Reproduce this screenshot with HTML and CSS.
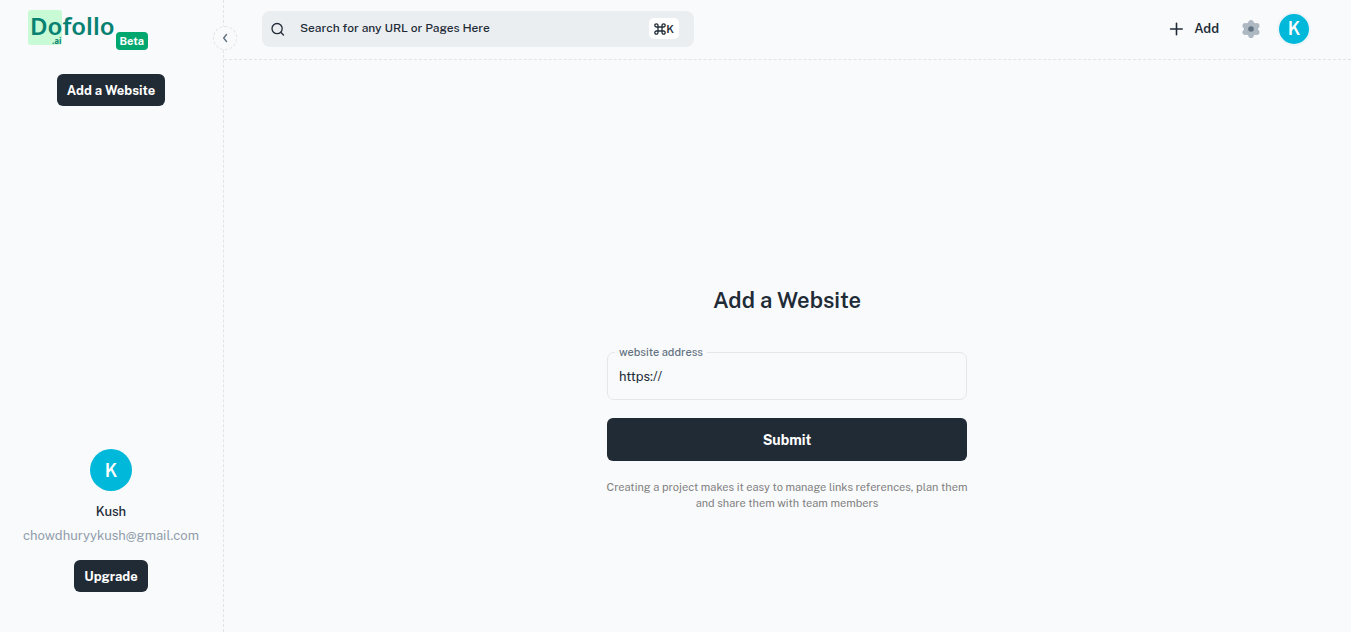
FILE: index.html
```html
<!DOCTYPE html>
<html lang="en">
<head>
    <meta charset="UTF-8">
    <meta name="viewport" content="width=device-width, initial-scale=1.0">
    <title>Dofollo.ai - Add a Website</title>
    <link rel="stylesheet" href="styles.css">
</head>
<body>
    <div class="layout">
        <aside class="sidebar">
            <a href="#" class="logo">
                <span class="logo-mark">Do<small class="logo-tld">.ai</small></span>
                <span class="logo-rest">follo</span>
                <span class="badge">Beta</span>
            </a>
            <button type="button" class="btn">Add a Website</button>
            <div class="account">
                <span class="avatar avatar-large">K</span>
                <div class="account-name">Kush</div>
                <div class="account-email">chowdhuryykush@gmail.com</div>
                <button type="button" class="btn">Upgrade</button>
            </div>
            <button type="button" class="collapse" aria-label="Collapse menu">
                <svg width="12" height="12" viewBox="0 0 12 12" fill="none" stroke="#637381" stroke-width="1.4" stroke-linecap="round" stroke-linejoin="round">
                    <path d="M7.5 2.5 4.7 6l2.8 3.5"/>
                </svg>
            </button>
        </aside>

        <div class="page">
            <header class="header">
                <div class="search">
                    <svg width="16" height="16" viewBox="0 0 16 16" fill="none" stroke="#212b36" stroke-width="1.3" stroke-linecap="round">
                        <circle cx="7.1" cy="7.6" r="5.1"/>
                        <path d="m11 11.5 2.5 2.5"/>
                    </svg>
                    <input type="text" class="search-input" placeholder="Search for any URL or Pages Here" aria-label="Search">
                    <kbd class="shortcut"><svg width="12" height="12" viewBox="0 0 12 12" fill="none" stroke="#212b36" stroke-width="1.3">
                        <path d="M4 4h4v4H4zM4 4H2.5A1.6 1.6 0 1 1 4 2.4zM8 4V2.4A1.6 1.6 0 1 1 9.5 4zM8 8h1.5A1.6 1.6 0 1 1 8 9.6zM4 8v1.6A1.6 1.6 0 1 1 2.5 8z"/>
                    </svg>K</kbd>
                </div>
                <div class="actions">
                    <button type="button" class="add-btn">
                        <svg width="14" height="14" viewBox="0 0 14 14" fill="none" stroke="#212b36" stroke-width="1.6" stroke-linecap="round">
                            <path d="M7.5 1.2v11.6M1.6 7h11.6"/>
                        </svg>
                        Add
                    </button>
                    <button type="button" class="icon-btn" aria-label="Settings">
                        <svg width="20" height="20" viewBox="0 0 20 20">
                            <g fill="#adb8c2">
                                <circle cx="10" cy="10" r="7.2"/>
                                <circle cx="10" cy="3.6" r="2.6"/>
                                <circle cx="15.8" cy="6.8" r="2.7"/>
                                <circle cx="15.8" cy="13.2" r="2.7"/>
                                <circle cx="10" cy="16.4" r="2.6"/>
                                <circle cx="4.2" cy="13.2" r="2.7"/>
                                <circle cx="4.2" cy="6.8" r="2.7"/>
                            </g>
                            <circle cx="10" cy="10" r="2.8" fill="#637381"/>
                        </svg>
                    </button>
                    <button type="button" class="avatar avatar-small" aria-label="Account">K</button>
                </div>
            </header>

            <main class="main">
                <form class="website-form">
                    <h1>Add a Website</h1>
                    <div class="field">
                        <label for="address">website address</label>
                        <input type="text" id="address" value="https://">
                    </div>
                    <button type="submit" class="btn submit">Submit</button>
                    <p class="hint">Creating a project makes it easy to manage links references, plan them and share them with team members</p>
                </form>
            </main>
        </div>
    </div>
</body>
</html>
```
FILE: styles.css
```css
* {
    box-sizing: border-box;
}
body {
    margin: 0;
    font-family: "Public Sans", Inter, sans-serif;
    font-size: 13px;
    color: #212b36;
    background-color: #f9fafc;
}
button, input {
    font-family: inherit;
    color: inherit;
}
button {
    padding: 0;
    border: none;
    background: none;
    cursor: pointer;
}
svg {
    display: block;
    flex-shrink: 0;
}
.layout {
    display: flex;
    min-height: 100vh;
}

/* sidebar */
.sidebar {
    position: relative;
    display: flex;
    flex-direction: column;
    align-items: center;
    width: 224px;
    flex-shrink: 0;
    padding: 10px 1px 40px 0;
    border-right: 1px dashed #e1e4e8;
}
.logo {
    display: flex;
    align-self: flex-start;
    height: 40px;
    margin: 0 0 24px 28px;
    color: #078171;
    font-family: "Noto Sans", sans-serif;
    font-size: 24px;
    font-weight: 600;
    line-height: 32px;
    text-decoration: none;
}
.logo-mark {
    display: flex;
    flex-direction: column;
    height: 35px;
    padding-left: 2px;
    border-radius: 3px;
    background-color: #c8fad6;
}
.logo-tld {
    align-self: flex-end;
    margin: -6px 1px 0 0;
    font-size: 8px;
    font-weight: 700;
    line-height: 9px;
}
.badge {
    align-self: flex-end;
    margin-left: 1px;
    padding: 0 4px;
    border-radius: 4px;
    background-color: #00a76f;
    color: #fff;
    font-family: "Public Sans", Inter, sans-serif;
    font-size: 11px;
    font-weight: 700;
    line-height: 18px;
}
.btn {
    height: 32px;
    padding: 0 10px;
    border-radius: 6px;
    background-color: #212b36;
    color: #fff;
    font-size: 13px;
    font-weight: 700;
}
.account {
    display: flex;
    flex-direction: column;
    align-items: center;
    margin-top: auto;
}
.account-name {
    margin-top: 12px;
    font-weight: 500;
    line-height: 18px;
}
.account-email {
    margin: 6px 0 15px;
    color: #919eab;
    line-height: 18px;
}
.avatar {
    display: flex;
    align-items: center;
    justify-content: center;
    border-radius: 50%;
    background-color: #00b8d9;
    color: #fff;
    font-size: 18px;
    font-weight: 600;
}
.avatar-large {
    width: 42px;
    height: 42px;
}
.avatar-small {
    width: 34px;
    height: 34px;
    border: 2px solid #eef4f8;
}
.collapse {
    position: absolute;
    top: 26px;
    right: -14px;
    display: flex;
    align-items: center;
    justify-content: center;
    width: 24px;
    height: 24px;
    border: 1px dashed #e1e4e8;
    border-radius: 50%;
    background-color: #f9fafc;
}

/* top bar */
.page {
    display: flex;
    flex: 1;
    flex-direction: column;
}
.header {
    display: flex;
    align-items: center;
    justify-content: space-between;
    height: 60px;
    padding: 0 40px 2px 38px;
    border-bottom: 1px dashed #e1e4e8;
}
.search {
    display: flex;
    align-items: center;
    width: 432px;
    height: 36px;
    padding: 0 15px 0 8px;
    border-radius: 8px;
    background-color: #ebeef1;
}
.search-input {
    flex: 1;
    min-width: 0;
    padding: 0 0 2px 14px;
    border: none;
    outline: none;
    background: none;
    font-size: 12px;
    font-weight: 500;
}
.search-input::placeholder {
    color: #212b36;
    opacity: 1;
}
.shortcut {
    display: flex;
    align-items: center;
    justify-content: center;
    width: 30px;
    height: 21px;
    border-radius: 5px;
    background-color: #fff;
    font-family: inherit;
    font-size: 11px;
    font-weight: 600;
}
.actions {
    display: flex;
    align-items: center;
}
.add-btn {
    display: flex;
    align-items: center;
    gap: 11px;
    font-size: 13px;
    font-weight: 600;
}
.icon-btn {
    margin: 0 16px 0 22px;
}

/* add website form */
.main {
    display: flex;
    justify-content: center;
    padding: 225px 1px 0 0;
}
.website-form {
    width: 360px;
}
h1 {
    margin: 0 0 37px;
    font-size: 22px;
    font-weight: 600;
    line-height: 30px;
    text-align: center;
}
.field {
    position: relative;
    margin-bottom: 18px;
}
.field label {
    position: absolute;
    top: -8px;
    left: 8px;
    padding: 0 4px;
    background-color: #f9fafc;
    color: #637381;
    font-size: 11px;
    font-weight: 500;
    line-height: 16px;
}
.field input {
    display: block;
    width: 100%;
    height: 48px;
    padding: 0 11px;
    border: 1px solid #e5e8eb;
    border-radius: 7px;
    outline: none;
    background: none;
    font-size: 13px;
}
.submit {
    width: 100%;
    height: 43px;
    font-size: 14px;
}
.hint {
    margin: 18px -4px 0;
    color: #808080;
    font-size: 11px;
    line-height: 16px;
    text-align: center;
}
```
